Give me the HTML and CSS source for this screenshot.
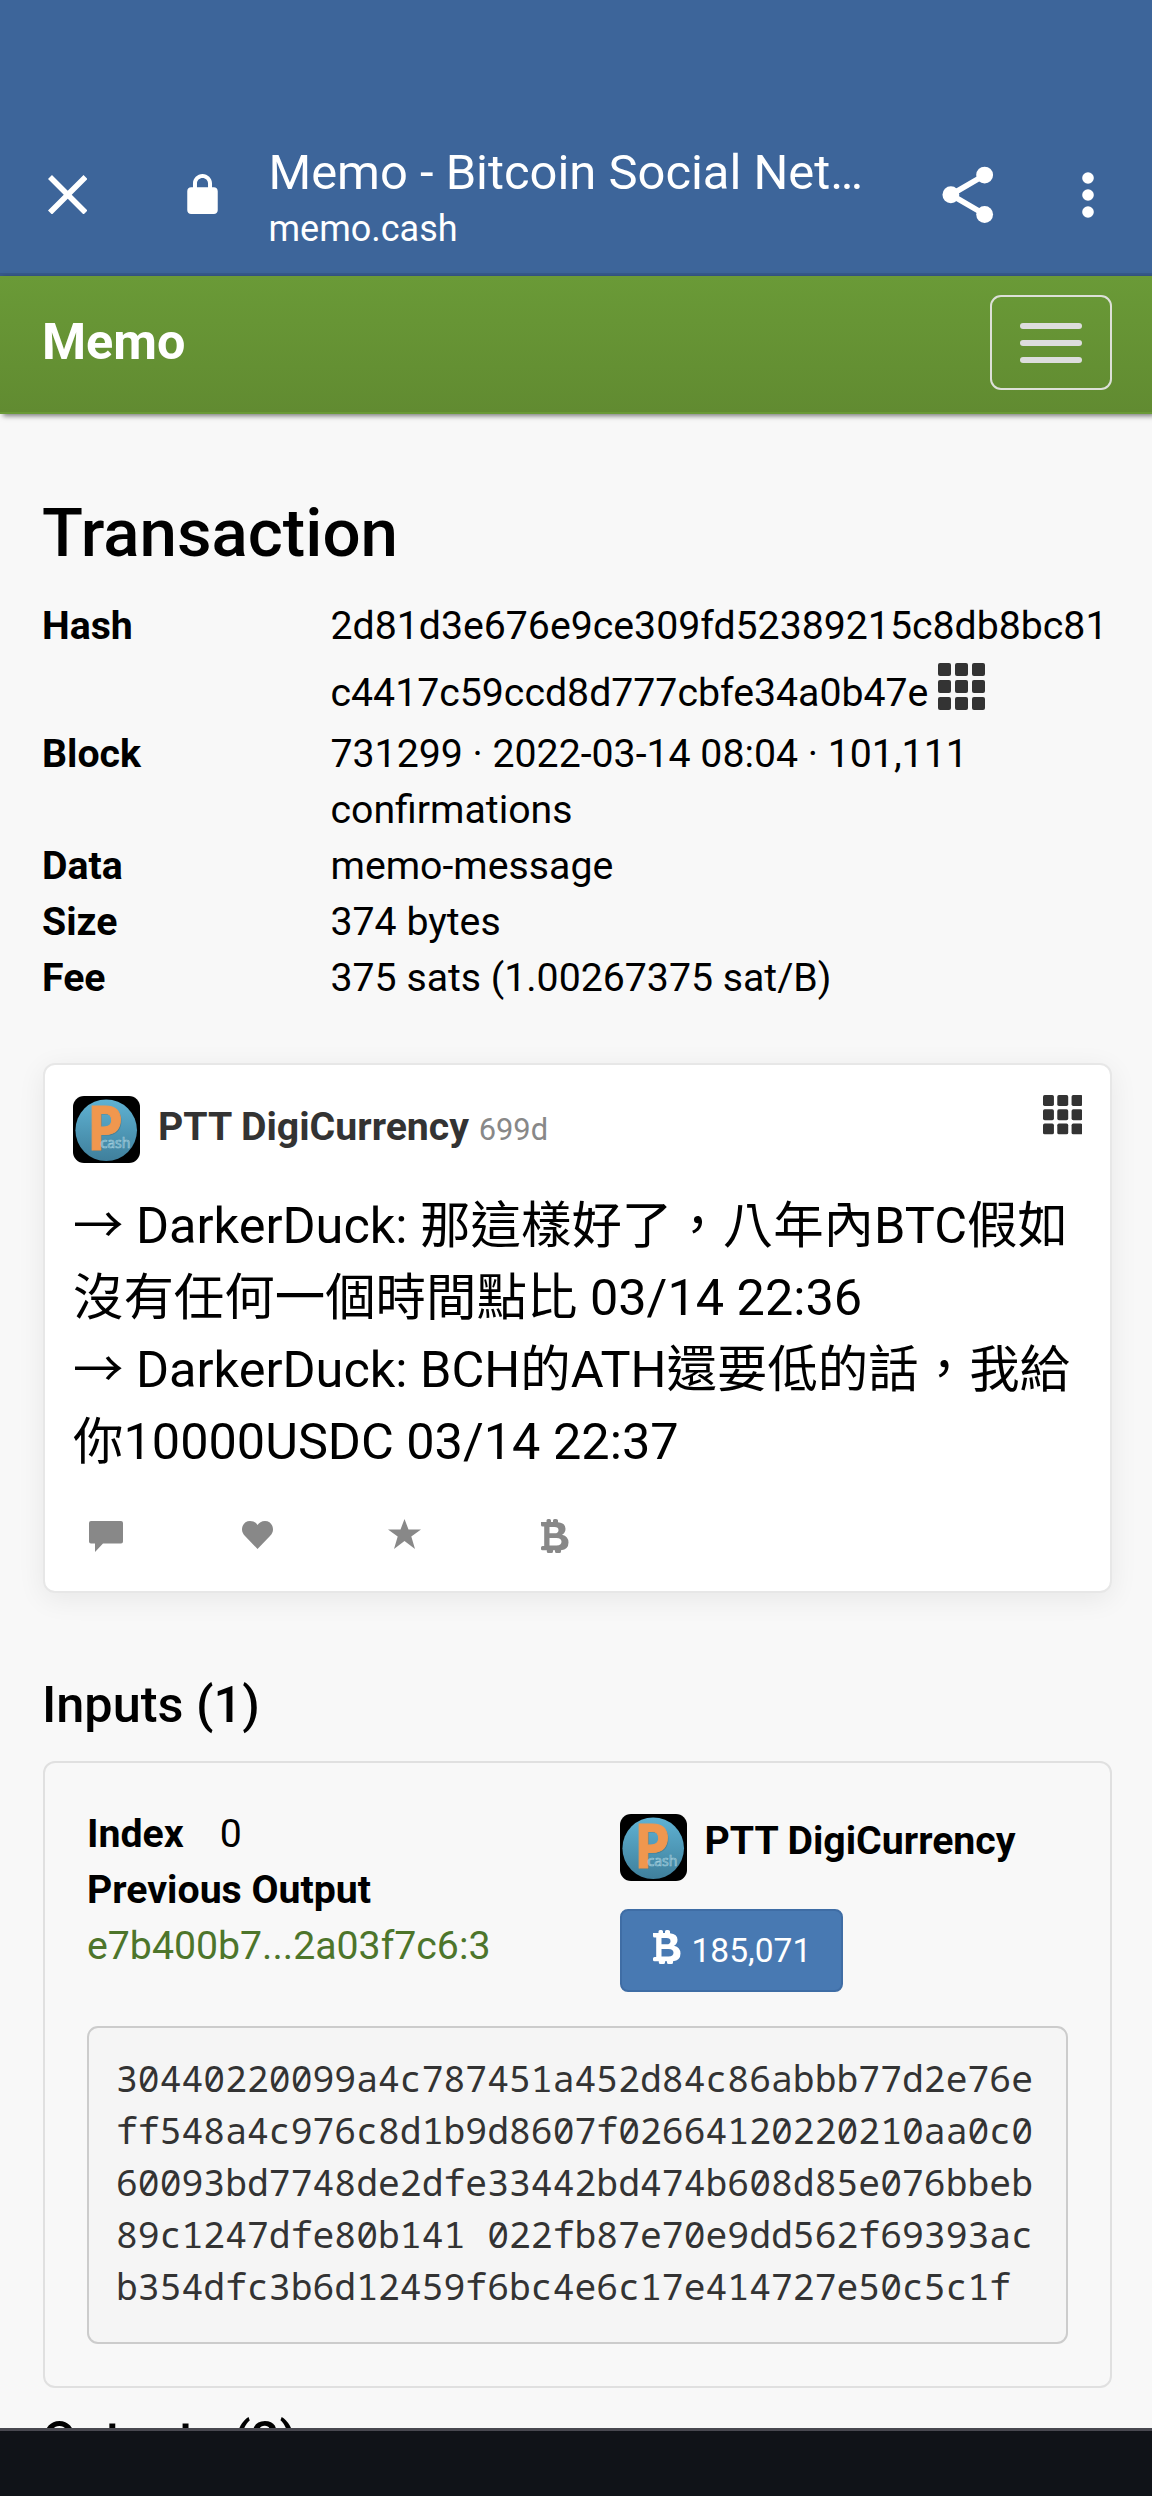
FILE: index.html
```html
<!DOCTYPE html>
<html lang="zh-Hant">
<head>
<meta charset="utf-8">
<title>Memo - Bitcoin Social Network</title>
<link rel="stylesheet" href="styles.css">
</head>
<body>
<svg width="0" height="0" class="defs" aria-hidden="true">
  <defs>
    <linearGradient id="disc" x1="0" y1="0" x2="0" y2="1">
      <stop offset="0" stop-color="#5fb2d3"/><stop offset="1" stop-color="#3f7f9b"/>
    </linearGradient>
    <symbol id="grid" viewBox="0 0 47 47">
      <g fill="#333">
        <rect width="13" height="13" rx="2"/><rect x="17" width="13" height="13" rx="2"/><rect x="34" width="13" height="13" rx="2"/>
        <rect y="17" width="13" height="13" rx="2"/><rect x="17" y="17" width="13" height="13" rx="2"/><rect x="34" y="17" width="13" height="13" rx="2"/>
        <rect y="34" width="13" height="13" rx="2"/><rect x="17" y="34" width="13" height="13" rx="2"/><rect x="34" y="34" width="13" height="13" rx="2"/>
      </g>
    </symbol>
    <symbol id="btc" viewBox="0 0 28 34">
      <path fill="currentColor" fill-rule="evenodd" d="M0 3H5.500V1.500Q5.500 0 7 0H8.500Q10 0 10 1.500V3H12V1.500Q12 0 13.500 0H15Q17 0 17 1.500V3.200Q24.500 4 24.500 9.800Q24.500 14 21 15.800Q27.500 17.500 27.500 23.500Q27.500 30.500 20 31.200V32.500Q20 34 18.500 34H15.500Q14 34 14 32.500V31.300H12V32.500Q12 34 10.500 34H7.500Q5.800 34 5.800 32.500V31.300H1.500Q0 31.300 0 30V28.500Q0 27 1.500 27H3.200V7.500H1.500Q0 7.500 0 6ZM8.500 8V14.300H13.500Q17.500 14.300 17.500 11.200Q17.500 8 13.500 8ZM8.500 19V26.500H15.500Q20.500 26.500 20.500 22.800Q20.500 19 15.500 19Z"/>
    </symbol>
    <symbol id="avatar" viewBox="0 0 67 67">
      <rect width="67" height="67" rx="11"/>
      <circle cx="33.200" cy="34.300" r="30.800" fill="url(#disc)"/>
      <text x="15" y="54.800" font-family="Open Sans, sans-serif" font-size="60.500" font-weight="700" textLength="36" lengthAdjust="spacingAndGlyphs" fill="#43707d" opacity=".55">P</text>
      <text x="14" y="53.700" font-family="Open Sans, sans-serif" font-size="60.500" font-weight="700" textLength="36" lengthAdjust="spacingAndGlyphs" fill="#f0974e" stroke="#f0974e" stroke-width="1">P</text>
      <text x="27.500" y="51.500" font-family="Open Sans, sans-serif" font-size="14.500" textLength="30" lengthAdjust="spacingAndGlyphs" fill="#4a90ab" stroke="#9cc9d9" stroke-width=".7">cash</text>
    </symbol>
  </defs>
</svg>

<div class="screen">
  <header class="chrome">
    <svg class="ic-close" viewBox="5 5 14 14"><path fill="#fff" d="M19 6.410L17.590 5 12 10.590 6.410 5 5 6.410 10.590 12 5 17.590 6.410 19 12 13.410 17.590 19 19 17.590 13.410 12z"/></svg>
    <svg class="ic-lock" viewBox="4 1 16 21"><path fill="#fff" d="M18 8h-1V6c0-2.760-2.240-5-5-5S7 3.240 7 6v2H6c-1.100 0-2 .9-2 2v10c0 1.100.9 2 2 2h12c1.100 0 2-.9 2-2V10c0-1.100-.9-2-2-2zM9.100 8V6c0-1.600 1.300-2.900 2.900-2.900s2.900 1.300 2.900 2.900v2z"/></svg>
    <div class="page-id">
      <div class="page-title">Memo - Bitcoin Social Net…</div>
      <div class="page-host">memo.cash</div>
    </div>
    <svg class="ic-share" viewBox="0 0 24 24"><path stroke="#fff" stroke-width="2" fill="none" d="M18 5L6 12l12 7"/><g fill="#fff"><circle cx="18" cy="5" r="3"/><circle cx="6" cy="12" r="3"/><circle cx="18" cy="19" r="3"/></g></svg>
    <svg class="ic-more" viewBox="0 0 12 46"><g fill="#fff"><circle cx="6" cy="6" r="5.800"/><circle cx="6" cy="23" r="5.800"/><circle cx="6" cy="40" r="5.800"/></g></svg>
  </header>

  <nav class="navbar">
    <a class="brand">Memo</a>
    <button class="toggle" aria-label="Menu"><span></span><span></span><span></span></button>
  </nav>

  <main>
    <h1>Transaction</h1>
    <dl class="facts">
      <dt>Hash</dt><dd>2d81d3e676e9ce309fd52389215c8db8bc81<br>c4417c59ccd8d777cbfe34a0b47e<svg class="hash-grid"><use href="#grid"/></svg></dd>
      <dt>Block</dt><dd>731299 · 2022-03-14 08:04 · 101,111 confirmations</dd>
      <dt>Data</dt><dd>memo-message</dd>
      <dt>Size</dt><dd>374 bytes</dd>
      <dt>Fee</dt><dd>375 sats (1.00267375 sat/B)</dd>
    </dl>

    <article class="post">
      <div class="post-head">
        <svg class="avatar"><use href="#avatar"/></svg>
        <div class="author"><b>PTT DigiCurrency</b> <small>699d</small></div>
        <svg class="post-grid"><use href="#grid"/></svg>
      </div>
      <p class="message">→ DarkerDuck: 那這樣好了，八年內BTC假如<br>沒有任何一個時間點比 03/14 22:36<br>→ DarkerDuck: BCH的ATH還要低的話，我給<br>你10000USDC 03/14 22:37</p>
      <div class="actions">
        <svg class="a-comment" viewBox="0 0 34 31"><path fill="#888" d="M2 0H32Q34 0 34 2V20.500Q34 22.500 32 22.500H14L6 31V22.500H2Q0 22.500 0 20.500V2Q0 0 2 0Z"/></svg>
        <svg class="a-heart" viewBox="0 0 31 28"><path fill="#888" d="M15.500 28L3 15C1 12.800 0 11 0 8.500 0 3.500 3.500 0 8 0c3.500 0 6 1.700 7.500 4C17 1.700 19.500 0 23 0c4.500 0 8 3.500 8 8.500 0 2.500-1 4.300-3 6.500z"/></svg>
        <svg class="a-star" viewBox="0 0 33 30"><path fill="#888" d="M16.500 0L20.500 10.500H33L23.300 17.600 27 30 16.500 22 6 30 9.700 17.600 0 10.500H12.500Z"/></svg>
        <svg class="a-btc"><use href="#btc"/></svg>
      </div>
    </article>

    <h2>Inputs (1)</h2>
    <section class="panel">
      <div class="io">
        <div class="io-left">
          <div><b>Index</b><span class="index">0</span></div>
          <div><b>Previous Output</b></div>
          <div><a class="link">e7b400b7...2a03f7c6:3</a></div>
        </div>
        <div class="io-right">
          <div class="owner"><svg class="avatar"><use href="#avatar"/></svg><b>PTT DigiCurrency</b></div>
          <a class="amount"><svg class="amount-btc"><use href="#btc"/></svg>185,071</a>
        </div>
      </div>
      <pre>30440220099a4c787451a452d84c86abbb77d2e76e
ff548a4c976c8d1b9d8607f02664120220210aa0c0
60093bd7748de2dfe33442bd474b608d85e076bbeb
89c1247dfe80b141 022fb87e70e9dd562f69393ac
b354dfc3b6d12459f6bc4e6c17e414727e50c5c1f</pre>
    </section>
    <h2 class="outputs">Outputs (2)</h2>
  </main>
  <footer class="system-bar"></footer>
</div>
</body>
</html>
```
FILE: styles.css
```css
* { box-sizing: border-box; }
body {
  margin: 0;
  background: #f8f8f8;
  color: #000;
  font: 39.24px/56px Roboto, "Noto Sans CJK TC", sans-serif;
}
svg { display: block; flex: none; }
.defs { position: absolute; }
.screen { width: 1152px; height: 2496px; display: flex; flex-direction: column; overflow: hidden; }

.chrome {
  height: 276px;
  flex: none;
  display: flex;
  align-items: center;
  padding: 116px 58px 0 47.500px;
  background: #3d659a;
  border-bottom: 3px solid #375a8b;
  color: #fff;
}
.ic-close { width: 39.500px; height: 39.500px; }
.ic-lock { width: 31px; height: 40px; margin: -1px 0 0 99.500px; }
.page-id { width: 600px; margin-left: 51px; padding-top: 6px; white-space: nowrap; }
.page-title { font-size: 48.900px; line-height: 58px; }
.page-host { font-size: 36px; line-height: 46px; margin-top: 4px; }
.ic-share { width: 67.500px; height: 67.500px; margin-left: 65px; }
.ic-more { width: 12px; height: 46px; margin-left: auto; }

.navbar {
  height: 138px;
  flex: none;
  display: flex;
  align-items: center;
  justify-content: space-between;
  padding: 0 40px 5px 42px;
  background: linear-gradient(#6a9a37, #618b31);
  border-bottom: 2px solid #6a9a37;
  box-shadow: 3px 2px 5px rgba(0, 0, 0, .5);
}
.brand { color: #fff; font-size: 50.400px; font-weight: 700; }
.toggle {
  width: 122px;
  height: 95px;
  margin-top: 2px;
  padding: 0;
  border: 2.500px solid #dde0d8;
  border-radius: 11px;
  background: none;
  display: flex;
  flex-direction: column;
  align-items: center;
  justify-content: center;
  gap: 11px;
}
.toggle span { width: 62px; height: 6px; border-radius: 3px; background: #ddd; }

main { flex: 1; min-height: 0; overflow: hidden; padding: 81px 40px 0 42px; }
h1, h2 { margin: 0; font-weight: 500; }
h1 { font-size: 67.260px; line-height: 76px; }

.facts { display: grid; grid-template-columns: 288.500px 1fr; margin: 26.600px 0 0; }
.facts dt { font-weight: 700; }
.facts dd { margin: 0; }
.hash-grid {
  display: inline-block;
  width: 47px;
  height: 47px;
  margin: 9px 0 16px 10px;
  vertical-align: -20px;
}

.post {
  height: 530px;
  margin: 57.500px 0 0 1px;
  padding: 31px 28px 0;
  border: 2px solid #e7e7e7;
  border-radius: 12px;
  background: #fff;
  box-shadow: 0 6px 28px rgba(0, 0, 0, .07);
}
.post-head { display: flex; align-items: flex-start; }
.avatar { width: 67px; height: 67px; }
.author { flex: 1; margin: 3px 0 0 18px; color: #333; }
.author small { font-size: 30.800px; color: #888; }
.post-grid { width: 39.500px; height: 39.500px; margin-top: -1px; }
.message { margin: 26.500px 0 0; font-size: 50.450px; line-height: 72.100px; white-space: nowrap; }
.actions { display: flex; margin: 40px 0 0 16px; height: 34px; color: #888; }
.a-comment { width: 34px; height: 31px; margin-top: 3.500px; }
.a-heart { width: 31px; height: 28px; margin: 3.500px 0 0 118.500px; }
.a-star { width: 33px; height: 30px; margin: 1.500px 0 0 115px; }
.a-btc { width: 28px; height: 34px; margin: 1px 0 0 120.500px; }

h2 { font-size: 50.450px; line-height: 56px; margin-top: 84px; }
.panel {
  height: 627px;
  margin: 28px 0 0 1px;
  padding: 43px 42px 0 42px;
  border: 2px solid #e0e0e0;
  border-radius: 12px;
}
.io { display: grid; grid-template-columns: 532.500px 1fr; height: 220px; }
.index { margin-left: 36px; }
.link { color: #4d752b; }
.io-right { padding-top: 8px; }
.owner { display: flex; }
.owner b { margin: -1px 0 0 18px; }
.amount {
  display: flex;
  align-items: center;
  width: 223px;
  height: 83px;
  margin-top: 28px;
  padding-left: 31px;
  border: 2px solid #3f6da5;
  border-radius: 8px;
  background: #4879b2;
  color: #fff;
  font-size: 33.600px;
}
.amount-btc { width: 28px; height: 34px; margin-right: 11px; margin-top: -7px; }
pre {
  height: 318px;
  margin: 0;
  padding: 24px 27px;
  border: 2px solid #ccc;
  border-radius: 11px;
  background: #f5f5f5;
  color: #333;
  font: 36.400px/52px "Noto Sans Mono", "DejaVu Sans Mono", monospace;
}
.outputs { margin-top: 24px; }

.system-bar { flex: none; height: 68px; background: #101318; border-top: 3.500px solid #484850; }
```
